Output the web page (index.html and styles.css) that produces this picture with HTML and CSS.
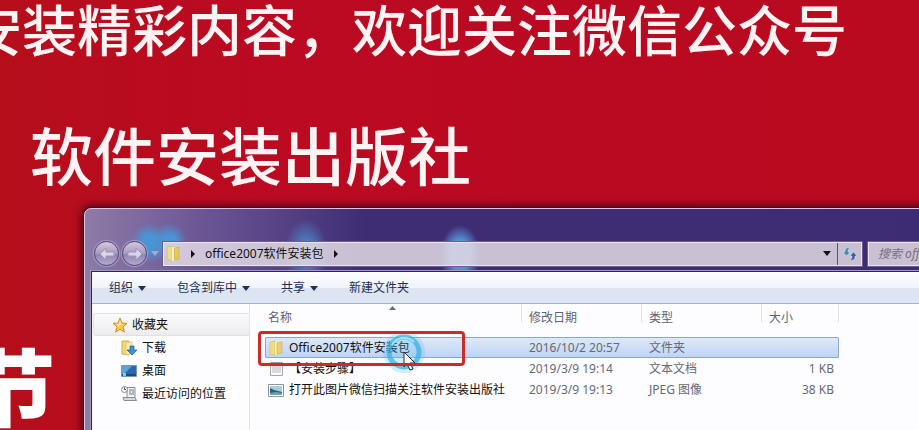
FILE: index.html
```html
<!DOCTYPE html>
<html lang="zh-CN">
<head>
    <meta charset="UTF-8">
    <meta name="viewport" content="width=device-width, initial-scale=1.0">
    <title>office2007软件安装包</title>
    <link rel="stylesheet" href="styles.css">
</head>
<body>
    <!-- Wallpaper text -->
    <header class="banner">
        <p class="banner-top">安装精彩内容，欢迎关注微信公众号</p>
        <h1 class="banner-name">软件安装出版社</h1>
    </header>

    <main class="desktop">
        <div class="wall-side">节</div>

        <section class="window">
            <div class="nav-bar">
                <button type="button" class="round" aria-label="后退">
                    <svg width="16" height="16" viewBox="0 0 16 16"><path d="M7 2 1 8l6 6v-4h8V6H7z" fill="#dcd3e6" stroke="#a093b8"/></svg>
                </button>
                <button type="button" class="round" aria-label="前进">
                    <svg width="16" height="16" viewBox="0 0 16 16"><path d="M9 2l6 6-6 6v-4H1V6h8z" fill="#dcd3e6" stroke="#a093b8"/></svg>
                </button>
                <button type="button" class="recent" aria-label="最近的页面">
                    <svg width="8" height="5" viewBox="0 0 8 5"><path d="M0 0h8L4 5z" fill="#a9a7d6"/></svg>
                </button>
                <div class="address">
                    <svg width="16" height="17" viewBox="0 0 16 17">
                        <path d="M2 2l5-1v15l-5-2z" fill="#f1dc83" stroke="#d2b856" stroke-width=".6"/>
                        <path d="M7 2h4v13l-4 1z" fill="#fbf0b4"/>
                        <path d="M9 3l5-1v12l-5 1z" fill="#e3c963" stroke="#c8ac4c" stroke-width=".6"/>
                        <path d="M8 3v12" stroke="#fffbe0"/>
                    </svg>
                    <svg width="4" height="8" viewBox="0 0 4 8"><path d="M0 0l4 4-4 4z" fill="#111"/></svg>
                    <a href="#">office2007软件安装包</a>
                    <svg width="4" height="8" viewBox="0 0 4 8"><path d="M0 0l4 4-4 4z" fill="#111"/></svg>
                    <button type="button" class="history" aria-label="以前的位置">
                        <svg width="8" height="5" viewBox="0 0 8 5"><path d="M0 0h8L4 5z" fill="#111"/></svg>
                    </button>
                    <button type="button" class="refresh" aria-label="刷新">
                        <svg width="16" height="14" viewBox="0 0 16 14">
                            <path d="M8 1C4 0 3 2 3 5H1l3.500 4L8 5H6c0-2 0-3 2-4z" fill="#3c8fae" stroke="#e8f4fa" stroke-width=".4"/>
                            <path d="M8 13c4 1 5-1 5-4h2l-3.500-4L8 9h2c0 2 0 3-2 4z" fill="#3f5c9c" stroke="#e8f4fa" stroke-width=".4"/>
                        </svg>
                    </button>
                </div>
                <input type="search" class="search" aria-label="搜索" placeholder="搜索 office2007软件安装包">
            </div>

            <div class="client">
                <div class="toolbar">
                    <button type="button">组织<svg width="8" height="5" viewBox="0 0 8 5"><path d="M0 0h8L4 5z"/></svg></button>
                    <button type="button">包含到库中<svg width="8" height="5" viewBox="0 0 8 5"><path d="M0 0h8L4 5z"/></svg></button>
                    <button type="button">共享<svg width="8" height="5" viewBox="0 0 8 5"><path d="M0 0h8L4 5z"/></svg></button>
                    <button type="button">新建文件夹</button>
                </div>

                <div class="panes">
                    <nav class="sidebar">
                        <a href="#" class="group">
                            <svg width="16" height="16" viewBox="0 0 16 16"><path d="M8 1l2 5 5 .4-4 3.400 1.400 5.200L8 12.200 3.600 15 5 9.800 1 6.400 6 6z" fill="#fbc94b" stroke="#d98a1e"/><path d="M8 3l1 4 3 .5-4 .5-3 3 1-3-3-1 4-.5z" fill="#fff0a8"/></svg>
                            收藏夹
                        </a>
                        <a href="#">
                            <svg width="16" height="16" viewBox="0 0 16 16">
                                <path d="M1 1h7v14l-7-1z" fill="#f0d878" stroke="#cfb04e"/>
                                <path d="M5 3l6-1v11l-6 2z" fill="#faeeb0" stroke="#d9bf63" stroke-width=".6"/>
                                <path d="M9 6h4v4h3l-5 5-5-5h3z" fill="#3c93d2" stroke="#1f609f" stroke-width=".7"/>
                            </svg>
                            下载
                        </a>
                        <a href="#">
                            <svg width="16" height="16" viewBox="0 0 16 16">
                                <path d="M.5 2.500h15v11H.5z" fill="#2569ae" stroke="#7f94ad"/>
                                <path d="M1 3h10L3 11H1z" fill="#5ea2da"/>
                                <path d="M1 11h14v2H1z" fill="#234678"/>
                                <path d="M2 10h3v3H2z" fill="#82d3df"/>
                            </svg>
                            桌面
                        </a>
                        <a href="#">
                            <svg width="16" height="16" viewBox="0 0 16 16">
                                <path d="M6 1.500h8v10H6z" fill="#f3f4f6" stroke="#858b95"/>
                                <path d="M8 4h5M8 6h2m1 0h2M8 8h5" stroke="#6a7482"/>
                                <path d="M2 11.500h12l1.500 3H3z" fill="#d6dade" stroke="#858b95"/>
                                <circle cx="3.500" cy="3.500" r="3" fill="#f8f8fa" stroke="#858b95"/>
                                <path d="M3.500 1.500v2H5" fill="none" stroke="#555"/>
                            </svg>
                            最近访问的位置
                        </a>
                    </nav>

                    <div class="files">
                        <table>
                            <colgroup>
                                <col class="col-name">
                                <col class="col-date">
                                <col class="col-type">
                                <col class="col-size">
                            </colgroup>
                            <thead>
                                <tr><th>名称</th><th>修改日期</th><th>类型</th><th>大小</th></tr>
                            </thead>
                            <tbody>
                                <tr class="selected">
                                    <td>
                                        <div class="file-name">
                                            <svg width="16" height="16" viewBox="0 0 16 16">
                                                <path d="M2 2l5-1v14l-5-1z" fill="#f1dc83" stroke="#d2b856" stroke-width=".6"/>
                                                <path d="M7 2h4v12l-4 1z" fill="#fbf0b4"/>
                                                <path d="M9 3l5-1v11l-5 1z" fill="#e9d077" stroke="#c8ac4c" stroke-width=".6"/>
                                            </svg>
                                            Office2007软件安装包
                                        </div>
                                    </td>
                                    <td>2016/10/2 20:57</td>
                                    <td>文件夹</td>
                                    <td></td>
                                </tr>
                                <tr>
                                    <td>
                                        <div class="file-name">
                                            <svg width="16" height="16" viewBox="0 0 16 16">
                                                <path d="M2.500 1.500h12v13h-12z" fill="#fafafa" stroke="#a3a6ad"/>
                                                <path d="M4 5h9M4 7h9M4 9h9M4 11h9" stroke="#b3bac4"/>
                                                <path d="M3 2h11" stroke="#777d88" stroke-dasharray="1 1"/>
                                            </svg>
                                            【安装步骤】
                                        </div>
                                    </td>
                                    <td>2019/3/9 19:14</td>
                                    <td>文本文档</td>
                                    <td>1 KB</td>
                                </tr>
                                <tr>
                                    <td>
                                        <div class="file-name">
                                            <svg width="16" height="16" viewBox="0 0 16 16">
                                                <path d="M.5 2.500h15v12H.5z" fill="#fff" stroke="#8f959d"/>
                                                <path d="M2 4h12v9H2z" fill="#a5cfdf"/>
                                                <path d="M2 6l4 2 4 1 4 1v3H2z" fill="#315f70"/>
                                                <path d="M2 11l6-1 6 1v2H2z" fill="#6fa0ae"/>
                                            </svg>
                                            打开此图片微信扫描关注软件安装出版社
                                        </div>
                                    </td>
                                    <td>2019/3/9 19:13</td>
                                    <td>JPEG 图像</td>
                                    <td>38 KB</td>
                                </tr>
                            </tbody>
                        </table>
                        <svg class="sort" width="7" height="4" viewBox="0 0 7 4"><path d="M0 4l3.500-4L7 4z" fill="#5d6f86"/></svg>
                        <svg class="pointer" width="48" height="48" viewBox="0 0 48 48">
                            <circle cx="24" cy="24" r="21" fill="#55bce8" opacity=".25"/>
                            <circle cx="24" cy="24" r="15" fill="none" stroke="#35aee6" stroke-width="5" opacity=".7"/>
                            <path d="M12 17a14 14 0 0 1 22-3" fill="none" stroke="#9fe4fa" stroke-width="2"/>
                            <path d="M24 24v15l3-3 3 6 3-1-3-6h5z" fill="#fff" stroke="#1b2733"/>
                        </svg>
                        <div class="highlight"></div>
                    </div>
                </div>
            </div>
        </section>
    </main>
</body>
</html>
```
FILE: styles.css
```css
* {
    margin: 0;
    padding: 0;
    box-sizing: border-box;
}

body {
    display: flex;
    flex-direction: column;
    height: 100vh;
    overflow: hidden;
    background: linear-gradient(90deg, #b60e1b, #bb0a22 30%, #b90a20);
    font-family: "Noto Sans", "Noto Sans CJK SC", sans-serif;
    font-size: 12px;
    line-height: 18px;
    color: #111;
}

button,
input {
    font: inherit;
    border: none;
    background: none;
}

a {
    color: inherit;
    text-decoration: none;
}

svg {
    display: block;
    flex: none;
}

/* Wallpaper text */
.banner {
    color: #fff3f3;
    white-space: nowrap;
}

.banner-top {
    display: flex;
    justify-content: flex-end;
    padding-right: 72px;
    font-size: 55px;
    font-weight: 500;
    line-height: 60px;
}

.banner-name {
    padding: 60px 0 16px 30px;
    font-size: 63px;
    font-weight: 500;
    line-height: 72px;
}

.desktop {
    display: flex;
    flex: 1;
    min-height: 0;
}

.wall-side {
    display: flex;
    justify-content: flex-end;
    width: 84px;
    padding: 132px 29px 0 0;
    color: #fff;
    font-size: 84px;
    font-weight: 900;
    line-height: 96px;
}

/* Explorer window */
.window {
    position: relative;
    display: flex;
    flex: 1;
    flex-direction: column;
    min-width: 0;
    margin-right: -160px;
    margin-bottom: -8px;
    padding: 0 6px;
    border: 1px solid #d9c6df;
    border-radius: 7px 7px 0 0;
    background:
        radial-gradient(ellipse 18px 20px at 64px 34px, #4a93d4 40%, transparent),
        radial-gradient(ellipse 18px 20px at 84px 34px, #4a93d4 40%, transparent),
        radial-gradient(ellipse 22px 34px at 221px 44px, #4b80c0 30%, transparent),
        radial-gradient(ellipse 20px 30px at 375px 46px, #5a8fd6 50%, transparent),
        linear-gradient(90deg, #8d7ba8, #6a5594 120px, #3f2d74 280px, #3d2c74);
    box-shadow: 0 0 0 1px #35102f, 0 0 9px 2px #3d0614;
}

.nav-bar {
    display: flex;
    align-items: center;
    padding: 32px 4px 5px 3px;
}

.round {
    display: flex;
    align-items: center;
    justify-content: center;
    width: 25px;
    height: 25px;
    margin-right: 3px;
    border: 1px solid #594c80;
    border-radius: 50%;
    background: linear-gradient(#d5c8dd, #a99abd 50%, #8f84b1 51%, #b3a8ce);
    box-shadow: 0 0 1px 1px #a99cc4;
}

.recent {
    padding: 0 4px 0 1px;
}

.address {
    display: flex;
    flex: 1;
    align-items: center;
    gap: 10px;
    height: 24px;
    margin-right: 6px;
    padding-left: 1px;
    border: 1px solid #eee3f2;
    background: rgba(225, 216, 228, 0.86);
    box-shadow: 0 0 0 1px #6d5c90;
}

.history {
    display: flex;
    justify-content: center;
    width: 20px;
    margin-left: auto;
    margin-right: -10px;
}

.refresh {
    display: flex;
    align-items: center;
    justify-content: center;
    width: 24px;
    height: 22px;
    border-left: 1px solid #5d5078;
}

.search {
    width: 200px;
    height: 24px;
    padding: 0 9px;
    border: 1px solid #eee3f2;
    background: rgba(225, 216, 228, 0.86);
    box-shadow: 0 0 0 1px #6d5c90;
}

.search::placeholder {
    color: #77717f;
    font-style: italic;
}

.client {
    display: flex;
    flex: 1;
    flex-direction: column;
    min-height: 0;
    border: 1px solid #2c2358;
    border-bottom: none;
    background: #fdfdff;
    box-shadow: 0 0 0 1px #a598c2;
}

.toolbar {
    display: flex;
    gap: 31px;
    padding: 7px 17px 6px;
    border-bottom: 1px solid #a9b1c6;
    background: linear-gradient(#fcfdff, #f0f4fc 50%, #dde4f1 51%, #dfe6f3);
}

.toolbar button {
    display: flex;
    align-items: center;
    gap: 5px;
    color: #1e2f52;
}

.toolbar svg {
    fill: #1e2f52;
}

.panes {
    display: flex;
    flex: 1;
}

/* Navigation pane */
.sidebar {
    width: 158px;
    padding: 9px 0 0 1px;
    border-right: 1px solid #dde4f2;
}

.sidebar a {
    display: flex;
    align-items: center;
    gap: 5px;
    height: 23px;
    padding-left: 28px;
}

.sidebar .group {
    gap: 4px;
    padding-left: 18px;
    border: 1px solid #e1e1e5;
    border-right: none;
    border-radius: 3px 0 0 3px;
    background: linear-gradient(#fbfbfc, #ececef);
}

/* File list */
.files {
    position: relative;
    flex: 1;
    padding-left: 15px;
}

table {
    width: 574px;
    table-layout: fixed;
    border-collapse: collapse;
}

.col-name {
    width: 257px;
}

.col-date,
.col-type {
    width: 120px;
}

.col-size {
    width: 77px;
}

th {
    padding: 5px 0 10px 7px;
    color: #5b6472;
    font-weight: normal;
    text-align: left;
    background: linear-gradient(#dfe4ee, #dfe4ee) right top / 1px 19px no-repeat;
}

th:first-child {
    padding-left: 3px;
}

td {
    height: 21px;
    padding-left: 7px;
    color: #656a73;
    white-space: nowrap;
}

td:first-child {
    padding-left: 3px;
    color: #111;
}

td:last-child {
    padding-right: 5px;
    text-align: right;
}

.selected {
    outline: 1px solid #8aa7cd;
    outline-offset: -1px;
    border-radius: 2px;
    background: linear-gradient(#e0eafa, #bdd3f5);
}

.file-name {
    display: flex;
    align-items: center;
    gap: 5px;
}

.sort {
    position: absolute;
    top: 2px;
    left: 139px;
}

.highlight {
    position: absolute;
    top: 27px;
    left: 8px;
    width: 207px;
    height: 35px;
    border: 3px solid #cc2c27;
    border-radius: 4px;
}

.pointer {
    position: absolute;
    top: 24px;
    left: 130px;
}
```
